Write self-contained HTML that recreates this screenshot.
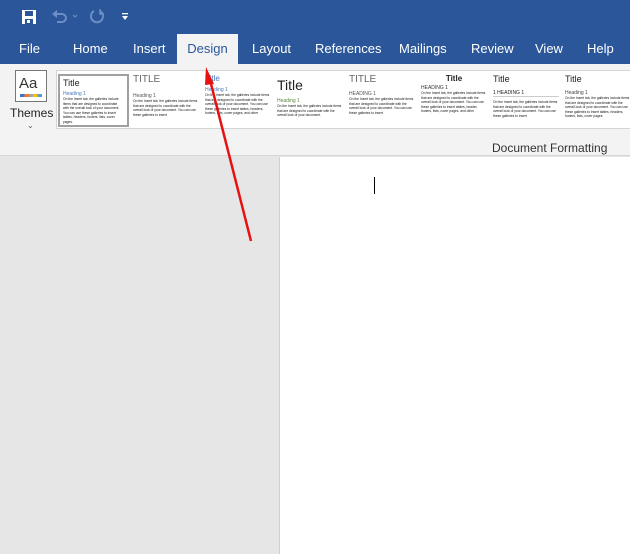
<!DOCTYPE html>
<html><head><style>
*{margin:0;padding:0;box-sizing:border-box}
body{width:630px;height:554px;overflow:hidden;font-family:"Liberation Sans",sans-serif;background:#e6e6e6;position:relative}
.top{position:absolute;left:0;top:0;width:630px;height:64px;background:#2b579a}
.tab{position:absolute;top:34px;height:30px;line-height:29px;color:#fff;font-size:13px}
.design{background:#f3f3f3;color:#2b579a;left:177px;width:61px;text-align:center}
.ribbon{position:absolute;left:0;top:64px;width:630px;height:92px;background:#f3f3f3;border-bottom:1px solid #d6d6d6}
.gal{position:absolute;left:56px;top:70px;width:574px;height:59px;background:#fff;border:1px solid #d4d4d4;border-right:none}
.th{position:absolute;top:3px;height:53px;overflow:hidden}
.th .t{font-size:9px;color:#222}
.th .h{font-size:5px;color:#4a76b8;margin-top:5px}
.th .b{font-size:3.3px;line-height:4.6px;color:#111}
.page{position:absolute;left:279px;top:157px;width:351px;height:397px;background:#fff;border-left:1px solid #cfcfcf}
</style></head><body>
<div class="top">
 <svg style="position:absolute;left:21px;top:9px" width="16" height="16" viewBox="0 0 16 16"><rect x="1" y="1" width="14" height="14" fill="#fff"/><rect x="4" y="2" width="8" height="5" fill="#2b579a"/><rect x="4" y="10" width="8" height="5" fill="#2b579a"/><rect x="6" y="11" width="3" height="3" fill="#fff"/></svg>
 <svg style="position:absolute;left:51px;top:9px" width="28" height="16" viewBox="0 0 28 16"><path d="M4 5 H11 A4 4 0 0 1 11 13 H6" stroke="#6c8ec4" stroke-width="2" fill="none"/><path d="M1 5 L6 1 V9Z" fill="#6c8ec4"/><path d="M22 6 l2 2 l2 -2" stroke="#6c8ec4" fill="none"/></svg>
 <svg style="position:absolute;left:89px;top:8px" width="16" height="16" viewBox="0 0 16 16"><path d="M11 3 A6 6 0 1 1 5 3" stroke="#6c8ec4" stroke-width="2" fill="none"/><path d="M11 1 V6 H15" stroke="#6c8ec4" stroke-width="1.5" fill="none"/></svg>
 <svg style="position:absolute;left:121px;top:12px" width="8" height="9" viewBox="0 0 8 9"><rect x="1" y="1" width="6" height="1.3" fill="#fff"/><path d="M1 4 H7 L4 8Z" fill="#fff"/></svg>
 <div class="tab" style="left:19px">File</div>
 <div class="tab" style="left:73px">Home</div>
 <div class="tab" style="left:133px">Insert</div>
 <div class="tab design">Design</div>
 <div class="tab" style="left:252px">Layout</div>
 <div class="tab" style="left:315px">References</div>
 <div class="tab" style="left:399px">Mailings</div>
 <div class="tab" style="left:471px">Review</div>
 <div class="tab" style="left:535px">View</div>
 <div class="tab" style="left:587px">Help</div>
</div>
<div class="ribbon">
 <div style="position:absolute;left:15px;top:6px;width:32px;height:32px;border:1px solid #777;background:#fff"><div style="font-size:15px;color:#333;margin:4px 0 0 3px">Aa</div><div style="position:absolute;left:4px;bottom:4px;width:22px;height:3px;background:linear-gradient(90deg,#4472c4 0 20%,#ed7d31 20% 40%,#a5a5a5 40% 60%,#ffc000 60% 80%,#5b9bd5 80%)"></div></div>
 <div style="position:absolute;left:10px;top:42px;font-size:12px;color:#222">Themes</div>
 <div style="position:absolute;left:27px;top:57px;font-size:8px;color:#555">⌄</div>
 <div style="position:absolute;left:492px;top:77px;font-size:12px;color:#333">Document Formatting</div>
</div>
<div class="gal">
 <div class="th" style="left:1px;width:71px;border:2px solid #a0a0a0;background:#fff;padding:2px 3px"><div class="t">Title</div><div class="h" style="margin-top:3px">Heading 1</div><div class="b">On the Insert tab, the galleries include items that are designed to coordinate with the overall look of your document. You can use these galleries to insert tables, headers, footers, lists, cover pages.</div></div>
 <div class="th" style="left:76px;width:68px"><div class="t" style="font-size:10px;color:#666">TITLE</div><div class="h" style="color:#555;margin-top:8px">Heading 1</div><div class="b">On the Insert tab, the galleries include items that are designed to coordinate with the overall look of your document. You can use these galleries to insert</div></div>
 <div class="th" style="left:148px;width:66px"><div class="t" style="font-size:8px;color:#4a76b8">Title</div><div class="h" style="margin-top:4px">Heading 1</div><div class="b">On the Insert tab, the galleries include items that are designed to coordinate with the overall look of your document. You can use these galleries to insert tables, headers, footers, lists, cover pages, and other</div></div>
 <div class="th" style="left:220px;width:66px"><div class="t" style="font-size:14px;margin-top:3px">Title</div><div class="h" style="color:#5a8a3a;margin-top:5px">Heading 1</div><div class="b">On the Insert tab, the galleries include items that are designed to coordinate with the overall look of your document.</div></div>
 <div class="th" style="left:292px;width:66px"><div class="t" style="font-size:10px;color:#666">TITLE</div><div class="h" style="color:#555;margin-top:6px">HEADING 1</div><div class="b">On the Insert tab, the galleries include items that are designed to coordinate with the overall look of your document. You can use these galleries to insert</div></div>
 <div class="th" style="left:364px;width:66px"><div class="t" style="font-size:8px;text-align:center;font-weight:bold">Title</div><div class="h" style="color:#333;margin-top:2px">HEADING 1</div><div class="b">On the Insert tab, the galleries include items that are designed to coordinate with the overall look of your document. You can use these galleries to insert tables, header, footers, lists, cover pages, and other</div></div>
 <div class="th" style="left:436px;width:66px"><div class="t">Title</div><div class="h" style="color:#222;margin-top:6px;border-bottom:1px solid #ccc">1 HEADING 1</div><div class="b" style="margin-top:3px">On the Insert tab, the galleries include items that are designed to coordinate with the overall look of your document. You can use these galleries to insert</div></div>
 <div class="th" style="left:508px;width:66px"><div class="t">Title</div><div class="h" style="color:#444;margin-top:6px">Heading 1</div><div class="b">On the Insert tab, the galleries include items that are designed to coordinate with the overall look of your document. You can use these galleries to insert tables, headers, footers, lists, cover pages.</div></div>
</div>
<div class="page"><div style="position:absolute;left:94px;top:20px;width:1px;height:17px;background:#000"></div></div>
<svg style="position:absolute;left:0;top:0" width="630" height="554"><line x1="251" y1="241" x2="210" y2="80" stroke="#e81010" stroke-width="2.5"/><path d="M206 67 L214 84 L205 85Z" fill="#e81010"/></svg>
</body></html>
